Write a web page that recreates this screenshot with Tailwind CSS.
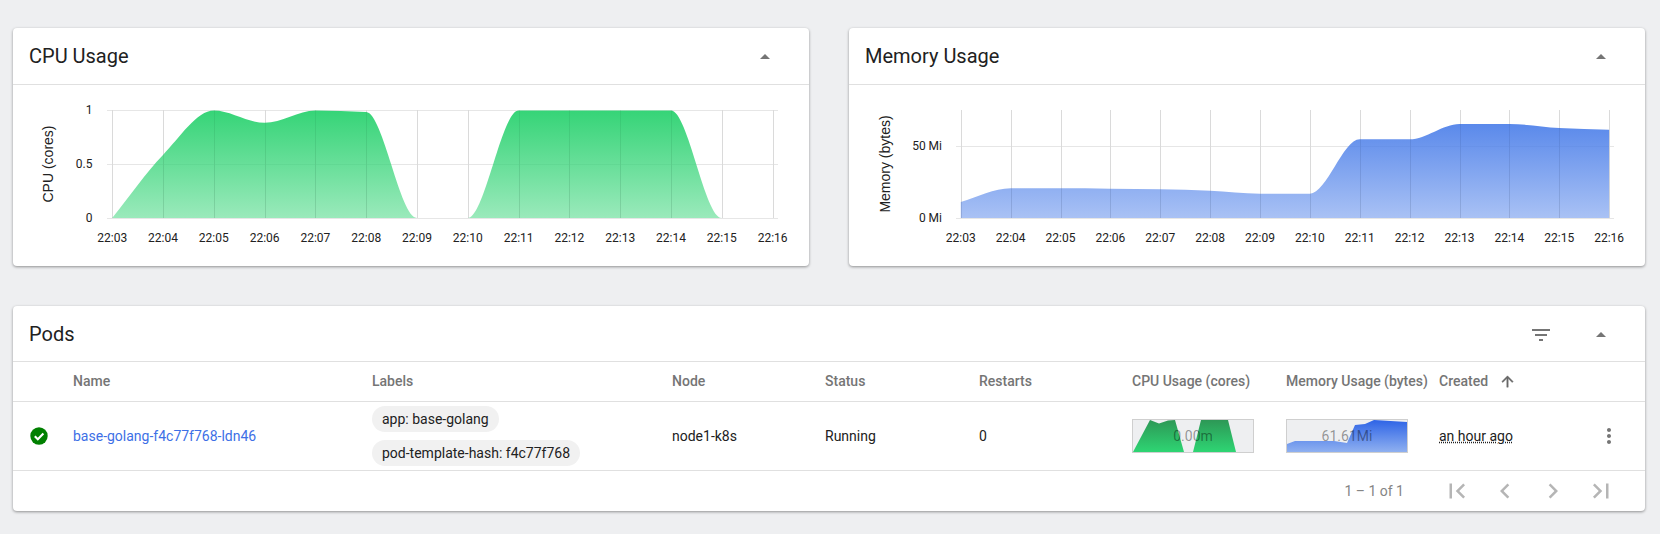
<!DOCTYPE html>
<html lang="en">
<head>
    <meta charset="UTF-8">
    <title>Pod Overview</title>
    <script src="https://cdn.jsdelivr.net/npm/@tailwindcss/browser@4"></script>
</head>
<body class="bg-[#eeeff1] font-[Roboto,sans-serif] text-sm text-[#212121] overflow-hidden">
    <div class="w-[1660px] h-[534px] pt-7 pl-[13px] pr-[15px]">
        <!-- Charts -->
        <div class="grid grid-cols-2 gap-10">
            <section class="bg-white rounded shadow-[0_1px_3px_rgba(0,0,0,0.4)] h-[238px]">
                <header class="h-[57px] border-b border-[#e0e0e0] flex items-center justify-between pl-4 pr-8">
                    <h2 class="text-xl">CPU Usage</h2>
                    <svg class="w-6 h-6 fill-[#757575]" viewBox="0 0 24 24"><path d="M7 15l5-5 5 5z"/></svg>
                </header>
                <svg id="cpuChart" class="block" width="796" height="181" viewBox="13 85 796 181"></svg>
            </section>
            <section class="bg-white rounded shadow-[0_1px_3px_rgba(0,0,0,0.4)] h-[238px]">
                <header class="h-[57px] border-b border-[#e0e0e0] flex items-center justify-between pl-4 pr-8">
                    <h2 class="text-xl">Memory Usage</h2>
                    <svg class="w-6 h-6 fill-[#757575]" viewBox="0 0 24 24"><path d="M7 15l5-5 5 5z"/></svg>
                </header>
                <svg id="memChart" class="block" width="796" height="181" viewBox="849 85 796 181"></svg>
            </section>
        </div>

        <!-- Pods table -->
        <section class="mt-10 bg-white rounded shadow-[0_1px_3px_rgba(0,0,0,0.4)]">
            <header class="h-14 border-b border-[#e0e0e0] flex items-center pl-4 pr-8">
                <h2 class="text-xl flex-1">Pods</h2>
                <svg class="w-6 h-6 mt-0.5 fill-[#757575]" viewBox="0 0 24 24"><path d="M10 18h4v-2h-4v2zM3 6v2h18V6H3zm3 7h12v-2H6v2z"/></svg>
                <svg class="w-6 h-6 ml-9 fill-[#757575]" viewBox="0 0 24 24"><path d="M7 15l5-5 5 5z"/></svg>
            </header>
            <table class="w-full table-fixed">
                <colgroup>
                    <col class="w-[60px]"><col class="w-[299px]"><col class="w-[300px]"><col class="w-[153px]"><col class="w-[154px]"><col class="w-[153px]"><col class="w-[154px]"><col class="w-[153px]"><col class="w-[140px]"><col>
                </colgroup>
                <thead>
                    <tr class="h-[39px] border-b border-[#e0e0e0] text-left text-[#757575]">
                        <th></th>
                        <th class="font-medium">Name</th>
                        <th class="font-medium">Labels</th>
                        <th class="font-medium">Node</th>
                        <th class="font-medium">Status</th>
                        <th class="font-medium">Restarts</th>
                        <th class="font-medium">CPU Usage (cores)</th>
                        <th class="font-medium">Memory Usage (bytes)</th>
                        <th class="font-medium">
                            <span class="flex items-center">Created
                                <svg class="w-[17px] h-[17px] ml-[11px] fill-[#686868] stroke-[#686868] stroke-[0.6]" viewBox="0 0 24 24"><path d="M4 12l1.41 1.41L11 7.83V20h2V7.83l5.58 5.59L20 12l-8-8-8 8z"/></svg>
                            </span>
                        </th>
                        <th></th>
                    </tr>
                </thead>
                <tbody>
                    <tr class="h-[69px] border-b border-[#e0e0e0]">
                        <td>
                            <svg class="w-5 h-5 ml-4" viewBox="0 0 20 20">
                                <circle cx="10" cy="10" r="8.7" fill="#008000"/>
                                <path d="M5.8 10.2l3 3 5.6-5.8" fill="none" stroke="#fff" stroke-width="2.1"/>
                            </svg>
                        </td>
                        <td><a href="#" class="text-[#3d6fe6]">base-golang-f4c77f768-ldn46</a></td>
                        <td>
                            <div class="flex flex-col items-start gap-2">
                                <span class="h-[26px] leading-[26px] px-2.5 rounded-[13px] bg-[#f1f1f1]">app: base-golang</span>
                                <span class="h-[26px] leading-[26px] px-2.5 rounded-[13px] bg-[#f1f1f1]">pod-template-hash: f4c77f768</span>
                            </div>
                        </td>
                        <td>node1-k8s</td>
                        <td>Running</td>
                        <td>0</td>
                        <td>
                            <div class="relative w-[122px] h-[34px] bg-[#eeeff1] border border-[#cfcfcf]">
                                <svg class="block" width="120" height="32" viewBox="0 0 120 32">
                                    <defs><linearGradient id="sparkCpu" x1="0" y1="0" x2="0" y2="1"><stop offset="0" stop-color="#2d9856"/><stop offset="1" stop-color="#2ed573"/></linearGradient></defs>
                                    <path d="M0 32L17 0L26 3.5L35 0.5L42 0L51 32L60 32L68 0L95 0L103 32Z" fill="url(#sparkCpu)"/>
                                </svg>
                                <span class="absolute inset-0 flex items-center justify-center text-black/40">0.00m</span>
                            </div>
                        </td>
                        <td>
                            <div class="relative w-[122px] h-[34px] bg-[#eeeff1] border border-[#cfcfcf]">
                                <svg class="block" width="120" height="32" viewBox="0 0 120 32">
                                    <defs><linearGradient id="sparkMem" x1="0" y1="0" x2="0" y2="1"><stop offset="0" stop-color="#2e64e6"/><stop offset="1" stop-color="#8fb0f0"/></linearGradient></defs>
                                    <path d="M0 32L0 24L8 21L47 21L60 23L68 5L78 4L87 0L120 2L120 32Z" fill="url(#sparkMem)"/>
                                </svg>
                                <span class="absolute inset-0 flex items-center justify-center text-black/40">61.61Mi</span>
                            </div>
                        </td>
                        <td><span class="underline decoration-dotted">an hour ago</span></td>
                        <td>
                            <svg class="w-6 h-6 ml-[18px] fill-[#757575]" viewBox="0 0 24 24"><path d="M12 8c1.1 0 2-.9 2-2s-.9-2-2-2-2 .9-2 2 .9 2 2 2zm0 2c-1.1 0-2 .9-2 2s.9 2 2 2 2-.9 2-2-.9-2-2-2zm0 6c-1.1 0-2 .9-2 2s.9 2 2 2 2-.9 2-2-.9-2-2-2z"/></svg>
                        </td>
                    </tr>
                </tbody>
            </table>
            <footer class="h-10 flex items-center justify-end gap-[18px] pr-[29px] fill-[#b5b5b5]">
                <span class="text-[#858585] mr-5">1 – 1 of 1</span>
                <svg class="w-[30px] h-[30px]" viewBox="0 0 24 24"><path d="M18.41 16.59L13.82 12l4.59-4.59L17 6l-6 6 6 6zM6 6h2v12H6z"/></svg>
                <svg class="w-[30px] h-[30px]" viewBox="0 0 24 24"><path d="M15.41 7.41L14 6l-6 6 6 6 1.41-1.41L10.83 12z"/></svg>
                <svg class="w-[30px] h-[30px]" viewBox="0 0 24 24"><path d="M10 6L8.59 7.41 13.17 12l-4.58 4.59L10 18l6-6z"/></svg>
                <svg class="w-[30px] h-[30px]" viewBox="0 0 24 24"><path d="M5.59 7.41L10.18 12l-4.59 4.59L7 18l6-6-6-6zM16 6h2v12h-2z"/></svg>
            </footer>
        </section>
    </div>

    <script>
        const labels = ['22:03','22:04','22:05','22:06','22:07','22:08','22:09','22:10','22:11','22:12','22:13','22:14','22:15','22:16'];

        // same curve as d3 curveMonotoneX
        function monotonePath(pts) {
            const n = pts.length;
            const d = [], m = [];
            for (let i = 0; i < n - 1; i++) d[i] = (pts[i + 1][1] - pts[i][1]) / (pts[i + 1][0] - pts[i][0]);
            m[0] = d[0];
            m[n - 1] = d[n - 2];
            for (let i = 1; i < n - 1; i++) {
                m[i] = d[i - 1] * d[i] <= 0 ? 0 : 2 * d[i - 1] * d[i] / (d[i - 1] + d[i]);
            }
            let path = `M${pts[0][0]} ${pts[0][1]}`;
            for (let i = 0; i < n - 1; i++) {
                const h = (pts[i + 1][0] - pts[i][0]) / 3;
                path += `C${pts[i][0] + h} ${pts[i][1] + m[i] * h} ${pts[i + 1][0] - h} ${pts[i + 1][1] - m[i + 1] * h} ${pts[i + 1][0]} ${pts[i + 1][1]}`;
            }
            return path;
        }

        function drawChart(svg, o) {
            const xs = labels.map((_, i) => o.x0 + o.step * i);
            const pts = o.ys.map((y, i) => [xs[i], y]);
            const area = monotonePath(pts) + `L${xs[xs.length - 1]} 218L${xs[0]} 218Z`;
            let html = `<defs><linearGradient id="${o.id}" gradientUnits="userSpaceOnUse" x1="0" y1="${o.gradTop}" x2="0" y2="218">
                <stop offset="0" stop-color="${o.color}" stop-opacity="${o.topOpacity}"/><stop offset="1" stop-color="${o.color}" stop-opacity="${o.bottomOpacity}"/></linearGradient></defs>`;
            xs.forEach(x => {
                html += `<line x1="${Math.round(x) + .5}" x2="${Math.round(x) + .5}" y1="110" y2="218" stroke="#e6e6e6"/>`;
            });
            o.yTicks.forEach(t => {
                html += `<line x1="${o.gridLeft}" x2="${o.gridRight}" y1="${t.y + .5}" y2="${t.y + .5}" stroke="#e6e6e6"/>`;
                html += `<text x="${o.tickRight}" y="${t.y + 4}" text-anchor="end" font-size="12" fill="#212121">${t.label}</text>`;
            });
            html += `<path d="${area}" fill="url(#${o.id})"/>`;
            // verticals show faintly through the fill
            xs.forEach(x => {
                html += `<line x1="${Math.round(x) + .5}" x2="${Math.round(x) + .5}" y1="110" y2="218" stroke="#000" stroke-opacity=".05"/>`;
            });
            xs.forEach((x, i) => {
                html += `<text x="${x}" y="242" text-anchor="middle" font-size="12" fill="#212121">${labels[i]}</text>`;
            });
            html += `<text transform="translate(${o.axisX} 164) rotate(-90)" text-anchor="middle" font-size="14" font-family="Liberation Sans" fill="#212121">${o.axis}</text>`;
            svg.innerHTML = html;
        }

        // cpu values are 0..1 of the 108px plot
        const cpu = [0, .587, 1, .885, 1, .985, 0, 0, 1, 1, 1, 1, 0, 0];
        drawChart(document.getElementById('cpuChart'), {
            id: 'cpuFill', color: '#35d477', topOpacity: 1, bottomOpacity: .5, gradTop: 110,
            x0: 112.2, step: 50.8, ys: cpu.map(v => 218 - v * 107.5),
            gridLeft: 107, gridRight: 778, tickRight: 92.5, axisX: 53, axis: 'CPU (cores)',
            yTicks: [{ y: 110, label: '1' }, { y: 164, label: '0.5' }, { y: 218, label: '0' }]
        });

        const mem = [606, 565, 565, 566, 568, 572, 581, 581, 418, 418, 372, 372, 384, 389];
        drawChart(document.getElementById('memChart'), {
            id: 'memFill', color: '#4c7fe9', topOpacity: .92, bottomOpacity: .48, gradTop: 124,
            x0: 960.8, step: 49.87, ys: mem.map(v => v / 3),
            gridLeft: 956, gridRight: 1614, tickRight: 942, axisX: 890, axis: 'Memory (bytes)',
            yTicks: [{ y: 146, label: '50 Mi' }, { y: 218, label: '0 Mi' }]
        });
    </script>
</body>
</html>
